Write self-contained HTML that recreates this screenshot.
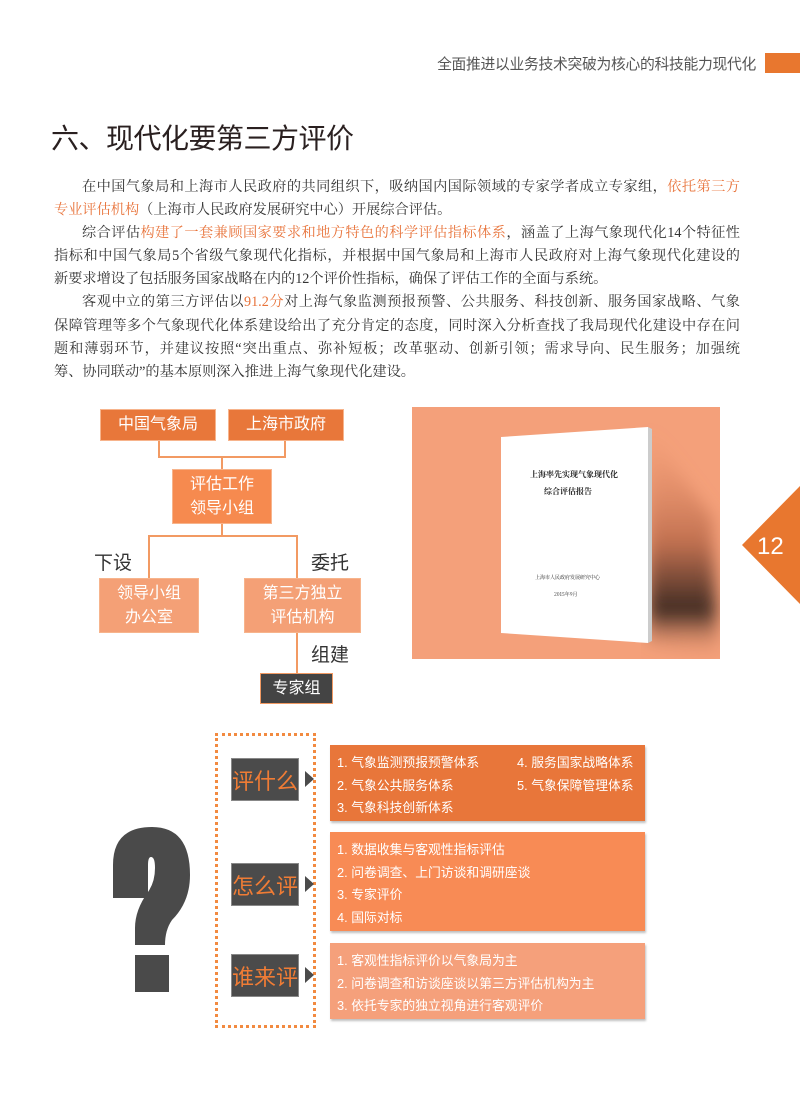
<!DOCTYPE html>
<html><head><meta charset="utf-8">
<style>
*{margin:0;padding:0;box-sizing:border-box}
body{width:800px;height:1118px;background:#fff;position:relative;overflow:hidden;font-family:"Liberation Sans","Noto Sans CJK SC",sans-serif}
.a{position:absolute}
.hdr{left:400px;top:53px;width:356px;text-align:right;font-size:14.8px;color:#555;letter-spacing:-0.3px}
.title{left:51px;top:117px;font-size:28px;color:#2a2020;letter-spacing:-0.5px}
.body{left:54px;top:176px;width:686px;font-family:"Liberation Serif","Noto Serif CJK SC",serif;font-size:14.2px;line-height:23.1px;color:#333}
.body div{white-space:nowrap;text-align:justify;text-align-last:justify;height:23.1px}
.body .last{text-align-last:left}
.o{color:#e8733a}
.in{padding-left:28px}
.bx{position:absolute;color:#fff;display:flex;align-items:center;justify-content:center;text-align:center;font-size:16px;line-height:24px;border:1.5px solid #f7b48c}
.ln{position:absolute;background:#f29a63}
.lab{font-size:19px;color:#333}
.lbl{position:absolute;left:231px;width:68px;height:43px;background:#4b4b4b;color:#f07c35;font-size:22px;display:flex;align-items:center;justify-content:center;border:1px solid #888}
.tri{position:absolute;left:305px;width:0;height:0;border-top:8px solid transparent;border-bottom:8px solid transparent;border-left:9px solid #4b4b4b}
.pn{position:absolute;left:330px;width:315px;color:#fff;font-size:12.8px;line-height:22.7px;padding:7px 0 0 7px;box-shadow:1px 2px 2px rgba(0,0,0,.25)}
</style></head><body>
<div class="a hdr">全面推进以业务技术突破为核心的科技能力现代化</div>
<div class="a" style="left:765px;top:53px;width:35px;height:20px;background:#e8772f"></div>
<div class="a title">六、现代化要第三方评价</div>
<div class="a body">
<div class="in">在中国气象局和上海市人民政府的共同组织下，吸纳国内国际领域的专家学者成立专家组，<span class="o">依托第三方</span></div>
<div class="last"><span class="o">专业评估机构</span>（上海市人民政府发展研究中心）开展综合评估。</div>
<div class="in">综合评估<span class="o">构建了一套兼顾国家要求和地方特色的科学评估指标体系</span>，涵盖了上海气象现代化14个特征性</div>
<div>指标和中国气象局5个省级气象现代化指标，并根据中国气象局和上海市人民政府对上海气象现代化建设的</div>
<div class="last">新要求增设了包括服务国家战略在内的12个评价性指标，确保了评估工作的全面与系统。</div>
<div class="in">客观中立的第三方评估以<span class="o">91.2分</span>对上海气象监测预报预警、公共服务、科技创新、服务国家战略、气象</div>
<div>保障管理等多个气象现代化体系建设给出了充分肯定的态度，同时深入分析查找了我局现代化建设中存在问</div>
<div>题和薄弱环节，并建议按照“突出重点、弥补短板；改革驱动、创新引领；需求导向、民生服务；加强统</div>
<div class="last">筹、协同联动”的基本原则深入推进上海气象现代化建设。</div>
</div>

<div class="ln" style="left:158px;top:440px;width:2px;height:18px"></div>
<div class="ln" style="left:284px;top:440px;width:2px;height:18px"></div>
<div class="ln" style="left:158px;top:456px;width:128px;height:2px"></div>
<div class="ln" style="left:221px;top:456px;width:2px;height:14px"></div>
<div class="ln" style="left:221px;top:523px;width:2px;height:14px"></div>
<div class="ln" style="left:148px;top:535px;width:150px;height:2px"></div>
<div class="ln" style="left:148px;top:535px;width:2px;height:44px"></div>
<div class="ln" style="left:296px;top:535px;width:2px;height:44px"></div>
<div class="ln" style="left:296px;top:632px;width:2px;height:42px"></div>
<div class="bx" style="left:100px;top:409px;width:116px;height:32px;background:#e8773a">中国气象局</div>
<div class="bx" style="left:228px;top:409px;width:116px;height:32px;background:#e8773a">上海市政府</div>
<div class="bx" style="left:172px;top:469px;width:100px;height:55px;background:#f68a4f">评估工作<br>领导小组</div>
<div class="bx" style="left:99px;top:578px;width:100px;height:55px;background:#f4a076">领导小组<br>办公室</div>
<div class="bx" style="left:244px;top:578px;width:117px;height:55px;background:#f4a076">第三方独立<br>评估机构</div>
<div class="bx" style="left:260px;top:673px;width:73px;height:31px;background:#444;border-color:#f29a63">专家组</div>
<div class="a lab" style="left:94px;top:548px">下设</div>
<div class="a lab" style="left:311px;top:548px">委托</div>
<div class="a lab" style="left:311px;top:640px">组建</div>

<svg class="a" style="left:412px;top:407px" width="308" height="252">
<defs>
<linearGradient id="sh" x1="0" y1="0" x2="0" y2="1">
<stop offset="0" stop-color="#e89068" stop-opacity="0"/>
<stop offset="0.5" stop-color="#c07050"/>
<stop offset="0.8" stop-color="#3d2a22"/>
<stop offset="1" stop-color="#e89068" stop-opacity="0"/>
</linearGradient>
<filter id="bl"><feGaussianBlur stdDeviation="8"/></filter>
</defs>
<rect width="308" height="252" fill="#f4a07a"/>
<polygon points="236,22 300,110 306,250 236,236" fill="url(#sh)" filter="url(#bl)"/>
<polygon points="89,30 236,20 236,236 89,226" fill="#fff"/>
<polygon points="236,20 240,22 240,234 236,236" fill="#ccc"/>
<text x="118" y="70" font-family="Noto Serif CJK SC,serif" font-size="8" font-weight="bold" fill="#222">上海率先实现气象现代化</text>
<text x="132" y="87" font-family="Noto Serif CJK SC,serif" font-size="8" font-weight="bold" fill="#222">综合评估报告</text>
<text x="123" y="172" font-family="Noto Serif CJK SC,serif" font-size="5" fill="#222">上海市人民政府发展研究中心</text>
<text x="142" y="189" font-family="Noto Serif CJK SC,serif" font-size="5" fill="#222">2015年9月</text>
</svg>

<svg class="a" style="left:742px;top:486px" width="58" height="118"><polygon points="0,59 58,0 58,118" fill="#e8772f"/></svg>
<div class="a" style="left:757px;top:533px;font-size:24px;color:#fff">12</div>

<svg class="a" style="left:100px;top:820px" width="100" height="180">
<path d="M13,78 L13,45 Q13,7 52,7 Q90,7 90,55 Q90,82 72,100 Q65,110 65,125 L35,125 L35,108 Q35,90 48,72 Q55,62 55,48 Q55,37 51,37 Q48,37 48,45 L48,78 Z" fill="#4a4a4a"/>
<rect x="35" y="135" width="34" height="37" fill="#4a4a4a"/>
</svg>
<div class="a" style="left:215px;top:733px;width:101px;height:295px;border:3px dotted #f28a40"></div>
<div class="lbl" style="top:758px">评什么</div>
<div class="tri" style="top:771px"></div>
<div class="lbl" style="top:863px">怎么评</div>
<div class="tri" style="top:876px"></div>
<div class="lbl" style="top:954px">谁来评</div>
<div class="tri" style="top:967px"></div>

<div class="pn" style="top:745px;height:76px;background:#e8763a">
<div style="position:relative">1. 气象监测预报预警体系<span class="a" style="left:180px;top:0">4. 服务国家战略体系</span></div>
<div style="position:relative">2. 气象公共服务体系<span class="a" style="left:180px;top:0">5. 气象保障管理体系</span></div>
<div>3. 气象科技创新体系</div>
</div>
<div class="pn" style="top:832px;height:99px;background:#f88b55">
<div>1. 数据收集与客观性指标评估</div>
<div>2. 问卷调查、上门访谈和调研座谈</div>
<div>3. 专家评价</div>
<div>4. 国际对标</div>
</div>
<div class="pn" style="top:943px;height:76px;background:#f5a07b">
<div>1. 客观性指标评价以气象局为主</div>
<div>2. 问卷调查和访谈座谈以第三方评估机构为主</div>
<div>3. 依托专家的独立视角进行客观评价</div>
</div>
</body></html>
